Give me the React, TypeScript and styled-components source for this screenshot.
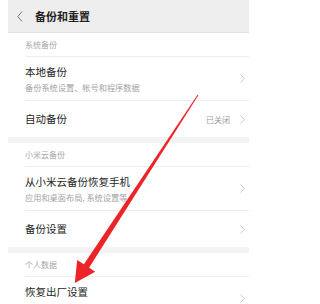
import styled, { createGlobalStyle } from 'styled-components';

const GlobalStyle = createGlobalStyle`
  html, body {
    margin: 0;
    padding: 0;
    background: #ffffff;
  }
  body {
    font-family: "Noto Sans CJK SC", "Noto Sans", sans-serif;
  }
`;

const Page = styled.div`
  position: relative;
  width: 249px;
  height: 304px;
  overflow: hidden;
  padding-left: 8px;
  box-sizing: border-box;
  background: #ffffff;
`;

const Screen = styled.div`
  display: flex;
  flex-direction: column;
  background: #ffffff;
`;

const Header = styled.div`
  display: flex;
  align-items: center;
  gap: 12px;
  height: 33px;
  padding-left: 9px;
  background: #eeeeee;
  border-bottom: 1px solid #e2e2e2;
  box-sizing: border-box;
`;

const Title = styled.div`
  font-size: 11px;
  font-weight: 700;
  color: #222222;
  line-height: 14px;
`;

const Band = styled.div`
  height: 6px;
  background: #f3f3f3;
`;

const SectionLabel = styled.div`
  display: flex;
  align-items: center;
  height: 23px;
  padding-left: 17px;
  font-size: 8px;
  color: #a8a8a8;
`;

const Item = styled.div<{ $tall?: boolean }>`
  display: flex;
  align-items: center;
  margin-left: 17px;
  padding-right: 4px;
  height: ${({ $tall }) => ($tall ? 44 : 37)}px;
  border-top: 1px solid #eeeeee;
  box-sizing: border-box;
`;

const ItemText = styled.div`
  flex: 1;
  display: flex;
  flex-direction: column;
  gap: 2px;
  min-width: 0;
`;

const ItemTitle = styled.div`
  font-size: 10.5px;
  line-height: 14px;
  color: #1e1e1e;
  white-space: nowrap;
`;

const ItemSub = styled.div`
  font-size: 8.2px;
  line-height: 12px;
  color: #a3a3a3;
  white-space: nowrap;
`;

const Value = styled.span`
  font-size: 8px;
  color: #9a9a9a;
  margin-right: 10px;
`;

const Overlay = styled.svg`
  position: absolute;
  left: 0;
  top: 0;
  pointer-events: none;
`;

const BackIcon = () => (
  <svg width="6" height="11" viewBox="0 0 6 11">
    <polyline points="5,0.5 0.8,5.5 5,10.5" fill="none" stroke="#777" strokeWidth="1" />
  </svg>
);

const Chevron = () => (
  <svg width="5" height="9" viewBox="0 0 5 9">
    <polyline points="0.5,0.5 4.3,4.5 0.5,8.5" fill="none" stroke="#c4c4c4" strokeWidth="0.9" />
  </svg>
);

type Row = { title: string; sub?: string; value?: string };

const sections: { label: string; rows: Row[] }[] = [
  {
    label: '系统备份',
    rows: [
      { title: '本地备份', sub: '备份系统设置、帐号和程序数据' },
      { title: '自动备份', value: '已关闭' },
    ],
  },
  {
    label: '小米云备份',
    rows: [
      { title: '从小米云备份恢复手机', sub: '应用和桌面布局, 系统设置等' },
      { title: '备份设置' },
    ],
  },
  {
    label: '个人数据',
    rows: [{ title: '恢复出厂设置', sub: '清除手机上的所有数据' }],
  },
];

export default function App() {
  return (
    <Page>
      <GlobalStyle />
      <Screen>
        <Header>
          <BackIcon />
          <Title>备份和重置</Title>
        </Header>
        {sections.map((s, i) => (
          <div key={s.label}>
            {i > 0 && <Band />}
            <SectionLabel>{s.label}</SectionLabel>
            {s.rows.map((r) => (
              <Item key={r.title} $tall={!!r.sub}>
                <ItemText>
                  <ItemTitle>{r.title}</ItemTitle>
                  {r.sub && <ItemSub>{r.sub}</ItemSub>}
                </ItemText>
                {r.value && <Value>{r.value}</Value>}
                <Chevron />
              </Item>
            ))}
          </div>
        ))}
      </Screen>
      <Overlay width="249" height="304" viewBox="0 0 249 304">
        <polygon points="198.4,95.3 197.6,94.7 82.4,266.6 87.6,270" fill="#ec2427" />
        <polygon points="74.8,283 77.2,260 95.2,271.8" fill="#ec2427" />
      </Overlay>
    </Page>
  );
}
